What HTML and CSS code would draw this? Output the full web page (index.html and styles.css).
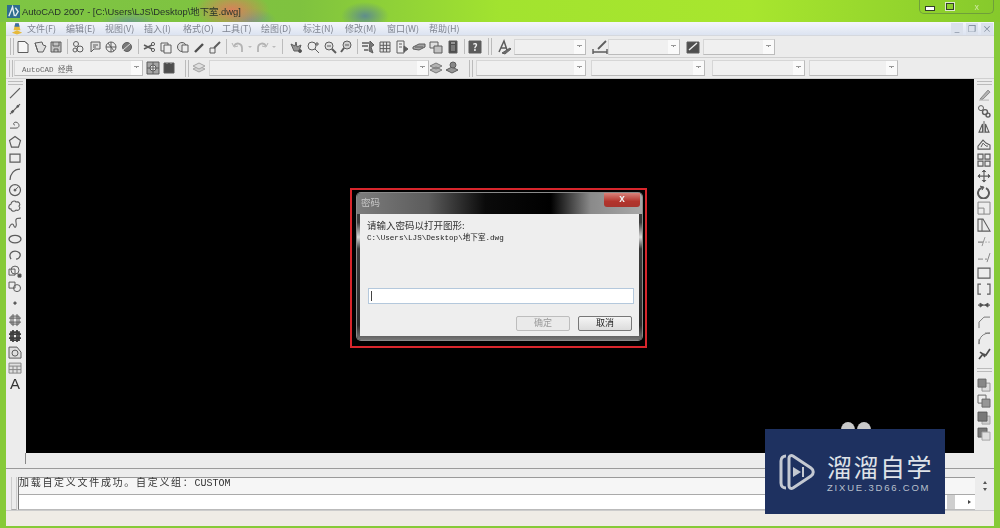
FILE: index.html
```html
<!DOCTYPE html>
<html lang="zh-CN">
<head>
<meta charset="UTF-8">
<title>AutoCAD 2007</title>
<link rel="stylesheet" href="styles.css">
</head>
<body>

<svg class="sprite" xmlns="http://www.w3.org/2000/svg">
  <symbol id="i-new" viewBox="0 0 14 14"><path d="M2 1.5h7l3 3v8H2z" fill="#f8f8f8"/><path d="M9 1.5l3 3"/></symbol>
  <symbol id="i-open" viewBox="0 0 14 14"><path d="M2 3l7-1 1 3 3 1-3 6H5z" fill="#ddd"/><path d="M2 3l3 9"/></symbol>
  <symbol id="i-save" viewBox="0 0 14 14"><path d="M2 2h10v10H2z" fill="#bbb"/><path d="M4 2v4h6V2M5 12V9h4v3"/></symbol>
  <symbol id="i-print" viewBox="0 0 14 14"><circle cx="5" cy="4" r="2.5"/><circle cx="9" cy="9" r="3"/><circle cx="4" cy="10" r="2"/></symbol>
  <symbol id="i-view" viewBox="0 0 14 14"><path d="M3 2h9v7H6l-3 3z" fill="#ddd"/><path d="M5 5h5M5 7h3"/></symbol>
  <symbol id="i-pub" viewBox="0 0 14 14"><circle cx="7" cy="7" r="5"/><path d="M2 7h10M7 2v10M4 3l6 8"/></symbol>
  <symbol id="i-globe" viewBox="0 0 14 14"><circle cx="7" cy="7" r="4.5" fill="#666"/><path d="M3 10l8-7" stroke="#ddd"/></symbol>
  <symbol id="i-cut" viewBox="0 0 14 14"><circle cx="10" cy="4" r="1.6"/><circle cx="10" cy="10" r="1.6"/><path d="M1 5l8 4M1 9l8-4" stroke-width="1.6"/></symbol>
  <symbol id="i-copy" viewBox="0 0 14 14"><path d="M2 3h7v8H2z" fill="#eee"/><path d="M5 5h7v8H5z" fill="#eee"/></symbol>
  <symbol id="i-paste" viewBox="0 0 14 14"><circle cx="6" cy="7" r="4.5" fill="#ddd"/><path d="M6 5h6v7H6z" fill="#eee"/></symbol>
  <symbol id="i-brush" viewBox="0 0 14 14"><path d="M3 12l8-8" stroke-width="2.4" stroke="#333"/></symbol>
  <symbol id="i-match" viewBox="0 0 14 14"><path d="M2 8h5v5H2z" fill="#eee"/><path d="M6 8l6-6" stroke-width="2"/></symbol>
  <symbol id="i-undo" viewBox="0 0 14 14"><path d="M3 6c2-4 8-3 8 2v4" stroke="#aaa" stroke-width="1.8"/><path d="M1 3l2 4 4-1" stroke="#aaa"/></symbol>
  <symbol id="i-redo" viewBox="0 0 14 14"><path d="M11 6C9 2 3 3 3 8v4" stroke="#aaa" stroke-width="1.8"/><path d="M13 3l-2 4-4-1" stroke="#aaa"/></symbol>
  <symbol id="i-pan" viewBox="0 0 14 14"><path d="M2 4l4 2 1-4 1 5 4-2-2 6H5z" fill="#888"/><circle cx="11" cy="11" r="1.5" fill="#333"/></symbol>
  <symbol id="i-zoom" viewBox="0 0 14 14"><circle cx="6" cy="6" r="4"/><path d="M9 9l4 4M11 2v4M9 4h4"/></symbol>
  <symbol id="i-zoomw" viewBox="0 0 14 14"><circle cx="6" cy="6" r="4" fill="#ddd"/><path d="M9 9l4 4" stroke-width="2"/><path d="M4 6h4"/></symbol>
  <symbol id="i-zoomp" viewBox="0 0 14 14"><circle cx="7" cy="5" r="4" fill="#ccc"/><path d="M4 8l-3 4" stroke-width="2"/><path d="M5 5h4"/></symbol>
  <symbol id="i-prop" viewBox="0 0 14 14"><path d="M1 3h7M1 6h6M3 10h4" stroke-width="1.6"/><path d="M9 1l4 4-3 2 2 6-4-2z" fill="#666"/></symbol>
  <symbol id="i-grid" viewBox="0 0 14 14"><path d="M2 2h10v10H2zM5.3 2v10M8.6 2v10M2 5.3h10M2 8.6h10" fill="#e4e4e4"/></symbol>
  <symbol id="i-sheet" viewBox="0 0 14 14"><path d="M2 1h7v12H2z" fill="#eee"/><path d="M4 4h3M4 7h3"/><path d="M9 6l4 3-4 3z" fill="#444"/></symbol>
  <symbol id="i-mark" viewBox="0 0 14 14"><path d="M1 7l6-3 6 0v3l-6 3-6-1z" fill="#999"/><path d="M3 7h8"/></symbol>
  <symbol id="i-table2" viewBox="0 0 14 14"><path d="M1 2h8v6H1z" fill="#ddd"/><path d="M5 6h8v7H5z" fill="#bbb"/></symbol>
  <symbol id="i-calc" viewBox="0 0 14 14"><path d="M3 1h8v12H3z" fill="#333"/><path d="M5 3h4" stroke="#ddd"/><path d="M5 6h4M5 8h4M5 10h4" stroke="#999"/></symbol>
  <symbol id="i-help" viewBox="0 0 14 14"><path d="M1 1h12v12H1z" fill="#444"/><text x="7" y="11" class="glyph-q">?</text></symbol>
  <symbol id="i-style" viewBox="0 0 16 16"><path d="M2 13L7 2l3 9M4 9h5" stroke-width="1.5"/><path d="M5 14l8-5 1 1-6 5z" fill="#555"/></symbol>
  <symbol id="i-dim" viewBox="0 0 16 16"><path d="M1 13h14M1 10v5M15 10v5" stroke-width="1.4"/><path d="M6 10l8-8" stroke-width="1.8"/></symbol>
  <symbol id="i-tstyle" viewBox="0 0 14 14"><path d="M1 2h12v11H1z" fill="#333"/><path d="M3 10l8-7" stroke="#eee" stroke-width="1.4"/></symbol>
  <symbol id="i-ws1" viewBox="0 0 14 14"><path d="M1 1h12v12H1z" fill="#999"/><circle cx="7" cy="7" r="3" fill="#eee"/><path d="M7 1v12M1 7h12"/></symbol>
  <symbol id="i-ws2" viewBox="0 0 14 14"><path d="M2 2h10v10H2z" fill="#333"/><path d="M5 1v2M9 1v2" stroke="#999"/></symbol>
  <symbol id="i-layers" viewBox="0 0 14 14"><path d="M1 8l6-3 6 3-6 3z" fill="#ccc" stroke="#999"/><path d="M1 5l6-3 6 3-6 3z" fill="#ddd" stroke="#999"/></symbol>
  <symbol id="i-layerm" viewBox="0 0 14 14"><path d="M1 5l6-3 6 3-6 3zM1 9l6-3 6 3-6 3z" fill="#aaa" stroke="#666"/></symbol>
  <symbol id="i-layerp" viewBox="0 0 14 14"><path d="M1 9l6-3 6 3-6 3z" fill="#888" stroke="#444"/><circle cx="8" cy="4" r="3" fill="#777"/></symbol>
  <symbol id="d-line" viewBox="0 0 14 14"><path d="M2 12L12 2" stroke-width="1.3"/></symbol>
  <symbol id="d-ray" viewBox="0 0 14 14"><path d="M2 12L12 2" stroke-width="1.3"/><path d="M3.5 10.5l2-2M9 5l1.5-1.5" stroke-width="2.4"/></symbol>
  <symbol id="d-pline" viewBox="0 0 14 14"><path d="M2 10h6c4 0 4-5 0-6-3 0-3 3-1 3"/></symbol>
  <symbol id="d-poly" viewBox="0 0 14 14"><path d="M7 1.5l5.5 4-2 6.5h-7l-2-6.5z" stroke-width="1.2"/></symbol>
  <symbol id="d-rect" viewBox="0 0 14 14"><path d="M2 3h10v8H2z" stroke-width="1.2"/></symbol>
  <symbol id="d-arc" viewBox="0 0 14 14"><path d="M2 13C2 7 6 2 12 2" stroke-width="1.2"/></symbol>
  <symbol id="d-circle" viewBox="0 0 14 14"><circle cx="7" cy="7" r="5.5" stroke-width="1.2"/><path d="M7 7l3-3"/><circle cx="7" cy="7" r="1" fill="#444"/></symbol>
  <symbol id="d-cloud" viewBox="0 0 14 14"><path d="M3 5c0-3 4-4 5-2 3-1 5 2 3 4 2 2 0 5-3 4-2 2-5 1-5-1-3 0-3-4 0-5z" stroke-width="1.1"/></symbol>
  <symbol id="d-spline" viewBox="0 0 14 14"><path d="M1 12c2-5 4-5 5-2s3 0 2-4 2-4 5-4" stroke-width="1.1"/></symbol>
  <symbol id="d-ellipse" viewBox="0 0 14 14"><ellipse cx="7" cy="7" rx="6" ry="3.8" stroke-width="1.3"/></symbol>
  <symbol id="d-earc" viewBox="0 0 14 14"><path d="M3 11C0 6 4 3 7 3s6 2 5 5-3 3-4 3" stroke-width="1.3"/></symbol>
  <symbol id="d-block" viewBox="0 0 14 14"><path d="M1 5h6v6H1z"/><circle cx="7" cy="6" r="4"/><path d="M10 10h3v3h-3z" fill="#333"/></symbol>
  <symbol id="d-make" viewBox="0 0 14 14"><path d="M1 2h6v6H1z"/><circle cx="9" cy="8" r="3.5"/></symbol>
  <symbol id="d-point" viewBox="0 0 14 14"><circle cx="7" cy="7" r="1.2" fill="#333"/></symbol>
  <symbol id="d-hatch" viewBox="0 0 14 14"><path d="M3 3h8v8H3zM1 5h12M1 9h12M5 1v12M9 1v12" stroke-width="1"/></symbol>
  <symbol id="d-grad" viewBox="0 0 14 14"><path d="M3 3h8v8H3zM1 5h12M1 9h12M5 1v12M9 1v12" stroke-width="1.8" stroke="#222"/></symbol>
  <symbol id="d-region" viewBox="0 0 14 14"><path d="M1 2h8l4 5v6H1z" fill="#ddd"/><circle cx="7" cy="8" r="3"/></symbol>
  <symbol id="d-table" viewBox="0 0 14 14"><path d="M1 2h12v10H1zM1 5h12M1 8.5h12M5 5v7M9 5v7" fill="#ddd" stroke="#777"/></symbol>
  <symbol id="m-erase" viewBox="0 0 14 14"><path d="M2 12h10" stroke="#aaa"/><path d="M3 11l8-9 2 2-7 7z" fill="#aaa" stroke="#777"/></symbol>
  <symbol id="m-copy" viewBox="0 0 14 14"><circle cx="4" cy="4" r="2.5"/><circle cx="8" cy="8" r="2.5" stroke-width="1.4"/><circle cx="11" cy="11" r="2" stroke-width="1.4"/></symbol>
  <symbol id="m-mirror" viewBox="0 0 14 14"><path d="M7 1v12"/><path d="M5.5 4L2 12h3.5zM8.5 4L12 12H8.500z" stroke-width="1.1"/></symbol>
  <symbol id="m-offset" viewBox="0 0 14 14"><path d="M1 12V9l5-6 3 3 4 2v4z" stroke-width="1.1"/><path d="M4 10l2-4 3 3h2"/></symbol>
  <symbol id="m-array" viewBox="0 0 14 14"><path d="M1 1h5v5H1zM8 1h5v5H8zM1 8h5v5H1zM8 8h5v5H8z" stroke-width="1.2"/></symbol>
  <symbol id="m-move" viewBox="0 0 14 14"><path d="M7 1v12M1 7h12" stroke-width="1.2"/><path d="M5 3l2-2 2 2M5 11l2 2 2-2M3 5L1 7l2 2M11 5l2 2-2 2" fill="#444"/></symbol>
  <symbol id="m-rotate" viewBox="0 0 14 14"><path d="M4 3a5.5 5.5 0 1 0 5 0" stroke-width="2"/><path d="M3 1l4 1-2 3" fill="#444"/></symbol>
  <symbol id="m-scale" viewBox="0 0 14 14"><path d="M1 1h12v12H1zM1 7h6v6" stroke="#777"/></symbol>
  <symbol id="m-stretch" viewBox="0 0 14 14"><path d="M1 1h5l7 12H1z" stroke-width="1.1"/><path d="M5 1v12"/></symbol>
  <symbol id="m-trim" viewBox="0 0 14 14"><path d="M1 8h5" stroke="#555"/><path d="M8 8h5" stroke="#aaa" stroke-dasharray="2 1"/><path d="M5 12l3-9" stroke="#888"/></symbol>
  <symbol id="m-extend" viewBox="0 0 14 14"><path d="M1 9h5M8 9h2" stroke="#777"/><path d="M10 12l3-9" stroke="#777"/></symbol>
  <symbol id="m-break" viewBox="0 0 14 14"><path d="M1 2h12v10H1z" stroke-width="1.1"/></symbol>
  <symbol id="m-break2" viewBox="0 0 14 14"><path d="M4 2H1v10h3M10 2h3v10h-3" stroke-width="1.2"/></symbol>
  <symbol id="m-join" viewBox="0 0 14 14"><path d="M1 7h12" stroke-width="1.3"/><path d="M3 5l3 2-3 2zM11 5L8 7l3 2z" fill="#222"/></symbol>
  <symbol id="m-chamfer" viewBox="0 0 14 14"><path d="M2 13V7l5-5h6" stroke="#666"/></symbol>
  <symbol id="m-fillet" viewBox="0 0 14 14"><path d="M2 13C2 6 6 2 13 2" stroke="#666"/><path d="M2 13V8M8 2h5" stroke="#666"/></symbol>
  <symbol id="m-explode" viewBox="0 0 14 14"><path d="M2 12l4-5 3 1 4-6M3 5l3 2 2 3" stroke="#333" stroke-width="1.7"/></symbol>
  <symbol id="o-front" viewBox="0 0 14 14"><path d="M5 5h8v8H5z" fill="#ddd" stroke="#888"/><path d="M1 1h8v8H1z" fill="#777" stroke="#555"/></symbol>
  <symbol id="o-back" viewBox="0 0 14 14"><path d="M1 1h8v8H1z" fill="#eee" stroke="#555"/><path d="M5 5h8v8H5z" fill="#888" stroke="#555"/></symbol>
  <symbol id="o-above" viewBox="0 0 14 14"><path d="M5 5h8v8H5z" fill="#ccc" stroke="#999"/><path d="M1 1h9v9H1z" fill="#666" stroke="#444"/></symbol>
  <symbol id="o-below" viewBox="0 0 14 14"><path d="M1 1h9v9H1z" fill="#666" stroke="#444"/><path d="M5 5h8v8H5z" fill="#ddd" stroke="#999"/></symbol>
</svg>

<div class="titlebar">
  <svg class="app-logo" viewBox="0 0 14 14"><rect width="14" height="14" fill="#2e6d8e"/><path d="M2 12L6 2l2 10M9 3l3 4-3 5" stroke="#e4eef0" stroke-width="1.5" fill="none"/></svg>
  <span class="app-title">AutoCAD 2007 - [C:\Users\LJS\Desktop\地下室.dwg]</span>
  <div class="win-controls">
    <span class="win-btn"><i class="min-bar"></i></span>
    <span class="win-btn"><i class="max-box"></i></span>
    <span class="win-btn win-close">x</span>
  </div>
</div>

<div class="app">
  <div class="menubar">
    <svg class="doc-logo" viewBox="0 0 14 14"><path d="M1 12l6-3 6 3-6 2z" fill="#e6b93a"/><path d="M5 1h4l2 8H3z" fill="#e6b93a"/><path d="M5 1h4l1 4H4z" fill="#3c6fa8"/></svg>
    <span>文件(F)</span><span>编辑(E)</span><span>视图(V)</span><span>插入(I)</span><span>格式(O)</span><span>工具(T)</span><span>绘图(D)</span><span>标注(N)</span><span>修改(M)</span><span>窗口(W)</span><span>帮助(H)</span>
    <div class="doc-controls"><span>_</span><span>&#10064;</span><span>×</span></div>
  </div>

  <div class="toolbar">
    <i class="grip"></i>
    <svg class="ico"><use href="#i-new"/></svg><svg class="ico"><use href="#i-open"/></svg><svg class="ico"><use href="#i-save"/></svg>
    <i class="sep"></i>
    <svg class="ico"><use href="#i-print"/></svg><svg class="ico"><use href="#i-view"/></svg><svg class="ico"><use href="#i-pub"/></svg><svg class="ico"><use href="#i-globe"/></svg>
    <i class="sep"></i>
    <svg class="ico"><use href="#i-cut"/></svg><svg class="ico"><use href="#i-copy"/></svg><svg class="ico"><use href="#i-paste"/></svg><svg class="ico"><use href="#i-brush"/></svg><svg class="ico"><use href="#i-match"/></svg>
    <i class="sep"></i>
    <svg class="ico"><use href="#i-undo"/></svg><b class="mini-arrow"></b><svg class="ico"><use href="#i-redo"/></svg><b class="mini-arrow"></b>
    <i class="sep sep-wide"></i>
    <svg class="ico ico-wide"><use href="#i-pan"/></svg><svg class="ico ico-wide"><use href="#i-zoom"/></svg><svg class="ico ico-wide"><use href="#i-zoomw"/></svg><svg class="ico ico-wide"><use href="#i-zoomp"/></svg>
    <i class="sep sep-narrow"></i>
    <svg class="ico ico-wide"><use href="#i-prop"/></svg><svg class="ico ico-wide"><use href="#i-grid"/></svg><svg class="ico ico-wide"><use href="#i-sheet"/></svg><svg class="ico ico-wide"><use href="#i-mark"/></svg><svg class="ico ico-wide"><use href="#i-table2"/></svg><svg class="ico ico-wide"><use href="#i-calc"/></svg>
    <i class="sep"></i>
    <svg class="ico"><use href="#i-help"/></svg>
    <i class="grip grip-gap"></i>
    <svg class="ico ico-lg"><use href="#i-style"/></svg>
    <div class="combo combo-s"><b></b></div>
    <svg class="ico ico-lg ico-dim"><use href="#i-dim"/></svg>
    <div class="combo combo-s"><b></b></div>
    <svg class="ico ico-ts"><use href="#i-tstyle"/></svg>
    <div class="combo combo-s"><b></b></div>
  </div>

  <div class="toolbar toolbar-two">
    <i class="grip"></i>
    <div class="combo combo-ws"><span>AutoCAD 经典</span><b></b></div>
    <svg class="ico ico-ws"><use href="#i-ws1"/></svg><svg class="ico"><use href="#i-ws2"/></svg>
    <i class="grip grip-two"></i>
    <svg class="ico"><use href="#i-layers"/></svg>
    <div class="combo combo-layer"><b></b></div>
    <svg class="ico ico-after"><use href="#i-layerm"/></svg><svg class="ico"><use href="#i-layerp"/></svg>
    <i class="grip grip-three"></i>
    <div class="combo combo-a"><b></b></div>
    <div class="combo combo-b"><b></b></div>
    <div class="combo combo-c"><b></b></div>
    <div class="combo combo-d"><b></b></div>
  </div>

  <div class="workspace">
    <div class="dock dock-left">
      <i class="dock-grip"></i>
      <svg class="ico"><use href="#d-line"/></svg><svg class="ico"><use href="#d-ray"/></svg><svg class="ico"><use href="#d-pline"/></svg><svg class="ico"><use href="#d-poly"/></svg><svg class="ico"><use href="#d-rect"/></svg><svg class="ico"><use href="#d-arc"/></svg><svg class="ico"><use href="#d-circle"/></svg><svg class="ico"><use href="#d-cloud"/></svg><svg class="ico"><use href="#d-spline"/></svg><svg class="ico"><use href="#d-ellipse"/></svg><svg class="ico"><use href="#d-earc"/></svg><svg class="ico"><use href="#d-block"/></svg><svg class="ico"><use href="#d-make"/></svg><svg class="ico"><use href="#d-point"/></svg><svg class="ico"><use href="#d-hatch"/></svg><svg class="ico"><use href="#d-grad"/></svg><svg class="ico"><use href="#d-region"/></svg><svg class="ico"><use href="#d-table"/></svg>
      <span class="dock-a">A</span>
    </div>
    <div class="canvas"></div>
    <div class="dock dock-right">
      <i class="dock-grip"></i>
      <svg class="ico"><use href="#m-erase"/></svg><svg class="ico"><use href="#m-copy"/></svg><svg class="ico"><use href="#m-mirror"/></svg><svg class="ico"><use href="#m-offset"/></svg><svg class="ico"><use href="#m-array"/></svg><svg class="ico"><use href="#m-move"/></svg><svg class="ico"><use href="#m-rotate"/></svg><svg class="ico"><use href="#m-scale"/></svg><svg class="ico"><use href="#m-stretch"/></svg><svg class="ico"><use href="#m-trim"/></svg><svg class="ico"><use href="#m-extend"/></svg><svg class="ico"><use href="#m-break"/></svg><svg class="ico"><use href="#m-break2"/></svg><svg class="ico"><use href="#m-join"/></svg><svg class="ico"><use href="#m-chamfer"/></svg><svg class="ico"><use href="#m-fillet"/></svg><svg class="ico"><use href="#m-explode"/></svg>
      <i class="dock-grip dock-grip-mid"></i>
      <svg class="ico"><use href="#o-front"/></svg><svg class="ico"><use href="#o-back"/></svg><svg class="ico"><use href="#o-above"/></svg><svg class="ico"><use href="#o-below"/></svg>
    </div>
  </div>

  <div class="canvas-foot"><i></i></div>

  <div class="command">
    <i class="cmd-grip"></i>
    <div class="cmd-box">
      <div class="cmd-history"><span class="cmd-cn">加载自定义文件成功。自定义组：</span>CUSTOM</div>
      <div class="cmd-input"><i class="cmd-thumb"></i><b class="cmd-right"></b></div>
    </div>
    <div class="cmd-scroll"><b class="up"></b><b class="down"></b></div>
  </div>
  <div class="statusbar"></div>
</div>

<!-- 密码对话框 -->
<div class="highlight">
  <div class="dialog">
    <div class="dlg-title"><span>密码</span><span class="dlg-close">x</span></div>
    <div class="dlg-body">
      <p class="dlg-prompt">请输入密码以打开图形:</p>
      <p class="dlg-path">C:\Users\LJS\Desktop\地下室.dwg</p>
      <div class="dlg-input"><i></i></div>
      <div class="dlg-buttons">
        <span class="btn btn-off">确定</span>
        <span class="btn">取消</span>
      </div>
    </div>
  </div>
</div>

<!-- 水印 -->
<i class="ear ear-l"></i><i class="ear ear-r"></i>
<div class="watermark">
  <svg class="wm-logo" viewBox="0 0 36 38"><path d="M7 3c-3 0-5 2-5 5v22c0 3 2 5 5 5" fill="none" stroke="#c4c9d2" stroke-width="3"/><path d="M10 5c0-2 2-3 4-2l18 12c3 2 3 6 0 8L14 35c-2 1-4 0-4-2z" fill="none" stroke="#c4c9d2" stroke-width="3"/><path d="M14 14l8 5-8 5z" fill="#c4c9d2"/><path d="M24 14v10" stroke="#c4c9d2" stroke-width="2"/></svg>
  <div class="wm-text">
    <div class="wm-cn">溜溜自学</div>
    <div class="wm-en">ZIXUE.3D66.COM</div>
  </div>
</div>

</body>
</html>
```

FILE: styles.css
```css
html, body {
  margin: 0;
  padding: 0;
}
body {
  width: 1000px;
  height: 528px;
  position: relative;
  overflow: hidden;
  font-family: "Noto Sans CJK SC", "Liberation Sans", sans-serif;
  background-color: #86ca38;
  color: #333;
}
.sprite {
  display: none;
}

/* title bar */
.titlebar {
  height: 22px;
  display: flex;
  align-items: center;
  padding-left: 7px;
  filter: blur(0.3px);
  background:
    radial-gradient(ellipse 38px 20px at 232px 10px, #d9805a 0, rgba(217, 128, 90, 0) 100%),
    radial-gradient(ellipse 24px 14px at 365px 16px, #5f8d8c 0, rgba(95, 141, 140, 0) 100%),
    radial-gradient(ellipse 26px 12px at 250px 20px, #6f9a8a 0, rgba(111, 154, 138, 0) 100%),
    radial-gradient(ellipse 30px 10px at 130px 22px, #6d9f86 0, rgba(109, 159, 134, 0) 100%),
    linear-gradient(90deg, #7ec544 0, #7fc23f 30%, #a2e32f 50%, #a8e62e 75%, #86c92c 100%);
}
.app-logo {
  width: 13px;
  height: 13px;
  flex: none;
}
.app-title {
  margin-left: 2px;
  font-family: "Liberation Sans", "Noto Sans CJK SC", sans-serif;
  font-size: 9.4px;
  color: #26332a;
  white-space: nowrap;
}
.win-controls {
  margin-left: auto;
  margin-right: 6px;
  width: 75px;
  height: 14px;
  align-self: flex-start;
  display: flex;
  box-sizing: border-box;
  border: 1px solid #6f9f3a;
  border-top: none;
  border-radius: 0 0 5px 5px;
}
.win-btn {
  flex: 1;
  display: flex;
  align-items: center;
  justify-content: center;
  font-size: 9px;
  line-height: 1;
  color: #cfe9a0;
}
.win-close {
  flex: 1.6;
}
.min-bar {
  width: 8px;
  height: 3px;
  margin-top: 3px;
  background: #fff;
  border: 1px solid #33402a;
}
.max-box {
  width: 6px;
  height: 5px;
  border: 1px solid #33402a;
  outline: 1px solid #dfe8cf;
}

.app {
  margin: 0 6px;
  height: 504px;
  display: flex;
  flex-direction: column;
  background-color: #ececec;
  filter: blur(0.35px);
}

/* menu */
.menubar {
  height: 14px;
  box-sizing: border-box;
  display: flex;
  align-items: center;
  font-size: 9px;
  color: #7f8490;
  background: linear-gradient(180deg, #f4f6fb 0, #dce3f1 100%);
  border-bottom: 1px solid #d5d8de;
}
.doc-logo {
  width: 12px;
  height: 13px;
  margin: 0 4px 0 5px;
  flex: none;
}
.menubar > span {
  width: 39px;
  white-space: nowrap;
}
.menubar > span:nth-of-type(n+7) {
  width: 42px;
}
.doc-controls {
  margin-left: auto;
  display: flex;
  gap: 3px;
  margin-right: 1px;
}
.doc-controls span {
  width: 12px;
  text-align: center;
  font-size: 9px;
  line-height: 12px;
  color: #6f7d8e;
  background-color: #dbe1ec;
}

/* toolbars */
.toolbar {
  height: 22px;
  box-sizing: border-box;
  display: flex;
  align-items: center;
  border-bottom: 1px solid #d0d0d0;
  padding-left: 4px;
}
.toolbar-two {
  height: 21px;
  padding-left: 3px;
}
.ico {
  width: 14px;
  height: 14px;
  margin: 0 1.2px;
  flex: none;
  fill: none;
  stroke: #444;
  stroke-width: 1;
  opacity: 0.85;
}
.ico-wide {
  margin: 0 1.5px;
}
.glyph-q {
  font-size: 10px;
  font-weight: bold;
  text-anchor: middle;
  fill: #eee;
  stroke: none;
}
.ico-lg {
  width: 16px;
  height: 16px;
  margin: 0 1px 0 0;
}
.ico-dim {
  margin-left: 6px;
  margin-right: 0;
}
.ico-ts {
  margin-left: 6px;
  margin-right: 3px;
}
.ico-ws {
  margin-left: 3px;
}
.ico-after {
  margin-left: 0;
}
.grip {
  width: 2px;
  height: 17px;
  margin-right: 1px;
  flex: none;
  border-left: 1px solid #bbb;
  border-right: 1px solid #bbb;
}
.grip-gap {
  margin-left: 4px;
  margin-right: 5px;
}
.grip-two {
  margin-left: 7px;
  margin-right: 2px;
}
.grip-three {
  margin-left: 8px;
  margin-right: 3px;
}
.sep {
  width: 1px;
  height: 15px;
  margin: 0 2.5px;
  flex: none;
  background-color: #bcbcbc;
}
.sep-wide {
  margin: 0 4px;
}
.sep-narrow {
  margin: 0 1.5px;
}
.mini-arrow {
  width: 0;
  height: 0;
  margin: 0 2px;
  border-left: 2px solid transparent;
  border-right: 2px solid transparent;
  border-top: 2px solid #bbb;
}
.combo {
  height: 16px;
  flex: none;
  display: flex;
  align-items: center;
  justify-content: space-between;
  box-sizing: border-box;
  padding-left: 7px;
  background-color: #f0f0f0;
  border: 1px solid #d6d6d6;
  border-right-color: #bbb;
  border-bottom-color: #bbb;
  font-family: "Liberation Mono", "Noto Sans CJK SC", monospace;
  font-size: 7.5px;
  color: #666;
}
.combo b {
  margin-left: auto;
  width: 11px;
  height: 14px;
  background:
    linear-gradient(#888, #888) center 6px / 1px 1px no-repeat,
    linear-gradient(#999, #999) center 5px / 5px 1px no-repeat,
    #fafafa;
}
.combo-s {
  width: 72px;
}
.combo-ws {
  width: 129px;
}
.combo-layer {
  width: 220px;
  margin-left: 2px;
}
.combo-a {
  width: 110px;
  margin-right: 5px;
}
.combo-b {
  width: 114px;
  margin-right: 7px;
}
.combo-c {
  width: 93px;
  margin-right: 4px;
}
.combo-d {
  width: 89px;
}

/* workspace */
.workspace {
  height: 374px;
  display: flex;
  flex: none;
}
.dock {
  width: 20px;
  flex: none;
  display: flex;
  flex-direction: column;
  align-items: center;
}
.dock .ico {
  margin: 1px 0;
  height: 14.2px;
}
.dock-left {
  padding-right: 2px;
  box-sizing: border-box;
}
.dock-grip {
  width: 15px;
  height: 2px;
  margin: 2px 0 0;
  flex: none;
  border-top: 1px solid #bbb;
  border-bottom: 1px solid #bbb;
}
.dock-right .dock-grip:first-child {
  margin-bottom: 2px;
}
.dock-right .dock-grip-mid {
  margin: 6px 0 5px;
}
.dock-a {
  font-family: "Liberation Sans", sans-serif;
  font-size: 15px;
  line-height: 16px;
  color: #333;
}
.canvas {
  flex: 1;
  background-color: #000;
}
.canvas-foot {
  height: 15px;
  flex: none;
  padding-left: 19px;
}
.canvas-foot i {
  display: block;
  width: 1px;
  height: 11px;
  background-color: #888;
}

/* command line */
.command {
  position: relative;
  height: 42px;
  flex: none;
  display: flex;
  align-items: stretch;
  padding: 8px 0 0 5px;
  box-sizing: border-box;
  border-top: 1px solid #9a9a9a;
}
.cmd-grip {
  width: 4px;
  margin-right: 1px;
  border-left: 1px solid #ccc;
  border-right: 1px solid #ccc;
  border-bottom: 1px solid #aaa;
}
.cmd-box {
  flex: 1;
  display: flex;
  flex-direction: column;
  border-left: 1px solid #777;
  border-bottom: 1px solid #bbb;
}
.cmd-history {
  height: 18px;
  box-sizing: border-box;
  background-color: #f6f6f6;
  border-top: 1px solid #999;
  border-bottom: 1px solid #aaa;
  font-family: "Liberation Mono", "Noto Sans CJK SC", monospace;
  font-size: 10px;
  line-height: 12px;
  color: #333;
  white-space: pre;
}
.cmd-cn {
  letter-spacing: 1.7px;
}
.cmd-input {
  flex: 1;
  display: flex;
  justify-content: flex-end;
  align-items: center;
  background-color: #fff;
}
.cmd-thumb {
  width: 8px;
  height: 100%;
  background-color: #cfcfcf;
}
.cmd-right {
  width: 0;
  height: 0;
  margin: 0 4px 0 13px;
  border-top: 2px solid transparent;
  border-bottom: 2px solid transparent;
  border-left: 3px solid #444;
}
.cmd-scroll {
  width: 19px;
  display: flex;
  flex-direction: column;
  align-items: center;
  padding-top: 4px;
  gap: 4px;
}
.cmd-scroll b {
  width: 0;
  height: 0;
  border-left: 2px solid transparent;
  border-right: 2px solid transparent;
}
.cmd-scroll .up {
  border-bottom: 3px solid #555;
}
.cmd-scroll .down {
  border-top: 3px solid #555;
}
.statusbar {
  flex: 1;
  background-color: #efece6;
  border-top: 1px solid #ccc;
}

/* dialog, sits over the canvas */
.highlight {
  position: absolute;
  left: 350px;
  top: 188px;
  width: 297px;
  height: 160px;
  box-sizing: border-box;
  border: 2px solid #d8262c;
  padding: 3px 3px 6px 5px;
  filter: blur(0.3px);
}
.dialog {
  height: 100%;
  box-sizing: border-box;
  display: flex;
  flex-direction: column;
  border-radius: 4px;
  background: linear-gradient(180deg, #3a3a3a 0, #3a3a3a 20%, #d8d8d8 30%, #3a3a3a 38%, #2a2a2a 90%, #777 100%);
  box-shadow: 0 0 0 1px #8a8a8a;
}
.dlg-title {
  height: 21px;
  flex: none;
  display: flex;
  justify-content: space-between;
  padding-left: 4px;
  font-size: 9.5px;
  line-height: 18px;
  color: #c8c8c8;
  border-radius: 4px 4px 0 0;
  background: linear-gradient(90deg, #7c7c7c 0, #5c5c5c 25%, #0a0a0a 45%, #000 68%, #8a8a8a 82%, #a8a8a8 100%);
}
.dlg-close {
  width: 36px;
  height: 14px;
  margin-right: 2px;
  text-align: center;
  font-family: "Liberation Sans", sans-serif;
  font-size: 10px;
  font-weight: bold;
  line-height: 12px;
  color: #f2f2f2;
  border-radius: 0 0 3px 3px;
  background: linear-gradient(180deg, #d9827a 0, #b3342c 60%, #a8332c 100%);
}
.dlg-body {
  flex: 1;
  display: flex;
  flex-direction: column;
  margin: 0 3px 4px;
  padding: 5px 5px 0 7px;
  background-color: #eeeeee;
}
.dlg-prompt {
  margin: 0;
  font-size: 9.5px;
  line-height: 13px;
  color: #333;
}
.dlg-path {
  margin: 0;
  font-family: "Liberation Mono", "Noto Sans CJK SC", monospace;
  font-size: 7.6px;
  line-height: 12px;
  color: #222;
}
.dlg-input {
  height: 16px;
  margin: 44px 0 0 1px;
  box-sizing: border-box;
  padding: 2px;
  background-color: #fff;
  border: 1px solid #b4c8dc;
}
.dlg-input i {
  display: block;
  width: 1px;
  height: 10px;
  background-color: #444;
}
.dlg-buttons {
  display: flex;
  justify-content: flex-end;
  gap: 8px;
  margin-top: 12px;
  margin-right: 2px;
}
.btn {
  width: 52px;
  height: 13px;
  text-align: center;
  font-size: 9px;
  line-height: 12px;
  color: #222;
  border: 1px solid #777;
  border-radius: 2px;
  background: linear-gradient(180deg, #f5f5f5 0, #dcdcdc 100%);
}
.btn-off {
  color: #999;
  border-color: #bdbdbd;
  background: #eaeaea;
}

/* watermark */
.ear {
  position: absolute;
  top: 422px;
  width: 14px;
  height: 16px;
  border-radius: 50%;
  background-color: #c9c9c9;
}
.ear-l {
  left: 841px;
}
.ear-r {
  left: 857px;
}
.watermark {
  position: absolute;
  left: 765px;
  top: 429px;
  width: 180px;
  height: 85px;
  display: flex;
  align-items: center;
  background-color: #1e3160;
}
.wm-logo {
  width: 36px;
  height: 38px;
  margin-left: 14px;
  flex: none;
}
.wm-text {
  margin-left: 12px;
  margin-top: 1px;
}
.wm-cn {
  font-size: 25px;
  line-height: 28px;
  letter-spacing: 1.5px;
  color: #dfe2e8;
  white-space: nowrap;
}
.wm-en {
  margin-top: 2px;
  font-family: "Liberation Sans", sans-serif;
  font-size: 9.5px;
  line-height: 11px;
  letter-spacing: 1.8px;
  color: #b9c0cc;
  white-space: nowrap;
}
```
